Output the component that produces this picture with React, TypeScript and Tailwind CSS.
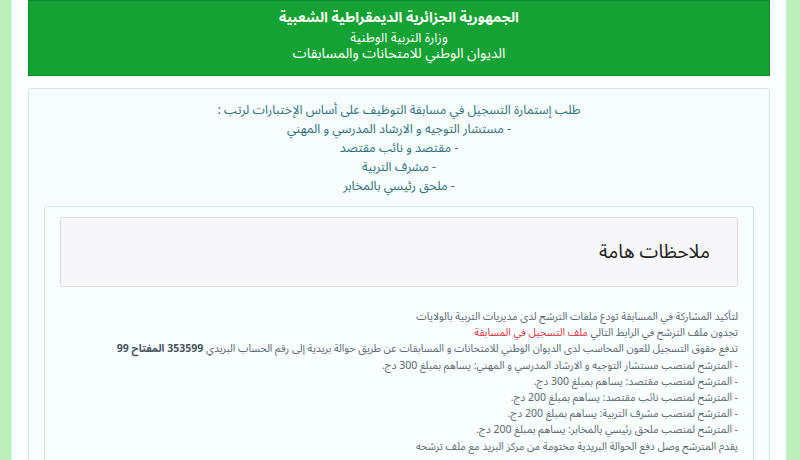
const posts = [
  "- مستشار التوجيه و الارشاد المدرسي و المهني",
  "- مقتصد و نائب مقتصد",
  "- مشرف التربية",
  "- ملحق رئيسي بالمخابر",
];

const fees = [
  "- المترشح لمنصب مستشار التوجيه و الارشاد المدرسي و المهني: يساهم بمبلغ 300 دج.",
  "- المترشح لمنصب مقتصد: يساهم بمبلغ 300 دج.",
  "- المترشح لمنصب نائب مقتصد: يساهم بمبلغ 200 دج.",
  "- المترشح لمنصب مشرف التربية: يساهم بمبلغ 200 دج.",
  "- المترشح لمنصب ملحق رئيسي بالمخابر: يساهم بمبلغ 200 دج.",
];

export default function App() {
  return (
    <div className="min-h-screen bg-[#bbefbb] flex">
      <div
        dir="rtl"
        className="ml-[11px] w-[775px] min-h-screen bg-[#fbfefe] border-l border-[#d4ecec] px-4 font-['Noto_Sans_Arabic','DejaVu_Sans',sans-serif]"
      >
        {/* Ministry header */}
        <header className="h-[76px] bg-[#13a233] border border-[#0e8a2a] text-white text-center pt-[6px]">
          <h1 className="text-[14px] font-bold leading-[22px]">الجمهورية الجزائرية الديمقراطية الشعبية</h1>
          <p className="text-[13px] leading-[16px] pt-px">وزارة التربية الوطنية</p>
          <p className="text-[14px] leading-[16px]">الديوان الوطني للامتحانات والمسابقات</p>
        </header>

        <section className="mt-[12px] border border-[#cfe6ea] rounded-[3px] bg-[#f7fdfd] px-[15px] pt-[12px]">
          <div className="text-center text-[#30707f] text-[12.5px] leading-[19px]">
            <p>طلب إستمارة التسجيل في مسابقة التوظيف على أساس الإختبارات لرتب :</p>
            {posts.map((p) => (
              <p key={p}>{p}</p>
            ))}
          </div>

          <div className="mt-[10px] border border-[#cfe6ea] rounded-[3px] bg-[#f9fefe] px-[15px] pt-[10px] pb-4">
            <div className="h-[70px] bg-[#f7f6f8] border border-[#dcdcdc] rounded-[3px] flex items-center pr-[27px]">
              <h2 className="text-[19px] text-[#222]">ملاحظات هامة</h2>
            </div>

            <div className="mt-[22px] text-[10.5px] leading-[16.2px] text-[#5b6870]">
              <p>لتأكيد المشاركة في المسابقة تودع ملفات الترشح لدى مديريات التربية بالولايات</p>
              <p>
                تجدون ملف الترشح في الرابط التالي{" "}
                <a className="text-[#e3343c]">ملف التسجيل في المسابقة</a>
              </p>
              <p>
                تدفع حقوق التسجيل للعون المحاسب لدى الديوان الوطني للامتحانات و المسابقات عن طريق حوالة بريدية إلى رقم الحساب البريدي{" "}
                <b className="text-[#46555e]">353599 المفتاح 99</b>
              </p>
              {fees.map((f) => (
                <p key={f}>{f}</p>
              ))}
              <p>يقدم المترشح وصل دفع الحوالة البريدية مختومة من مركز البريد مع ملف ترشحه</p>
            </div>
          </div>
        </section>
      </div>
    </div>
  );
}
